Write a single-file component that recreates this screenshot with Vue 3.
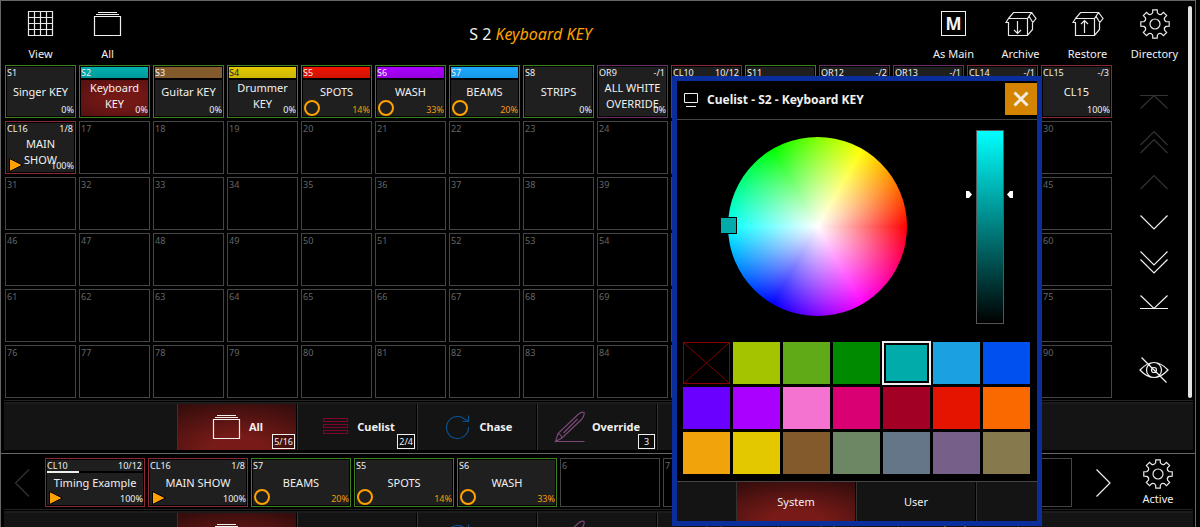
<script setup>
import { ref, computed, h } from 'vue'

const playbacks = [
  { id: 'S1', name: 'Singer KEY', kind: 'sub', pct: '0%' },
  { id: 'S2', name: 'Keyboard\nKEY', kind: 'sub', pct: '0%', strip: 'teal', active: true },
  { id: 'S3', name: 'Guitar KEY', kind: 'sub', pct: '0%', strip: 'brown' },
  { id: 'S4', name: 'Drummer\nKEY', kind: 'sub', pct: '0%', strip: 'yellow' },
  { id: 'S5', name: 'SPOTS', kind: 'sub', pct: '14%', strip: 'red', state: 'ring' },
  { id: 'S6', name: 'WASH', kind: 'sub', pct: '33%', strip: 'violet', state: 'ring' },
  { id: 'S7', name: 'BEAMS', kind: 'sub', pct: '20%', strip: 'blue', state: 'ring' },
  { id: 'S8', name: 'STRIPS', kind: 'sub', pct: '0%' },
  { id: 'OR9', name: 'ALL WHITE\nOVERRIDE', kind: 'ovr', pct: '0%', count: '-/1' },
  { id: 'CL10', kind: 'cue', count: '10/12' },
  { id: 'S11', kind: 'sub' },
  { id: 'OR12', kind: 'ovr', count: '-/2' },
  { id: 'OR13', kind: 'ovr', count: '-/1' },
  { id: 'CL14', kind: 'cue', count: '-/1' },
  { id: 'CL15', name: 'CL15', kind: 'cue', pct: '100%', count: '-/3' },
  { id: 'CL16', name: 'MAIN\nSHOW', kind: 'cue', pct: '100%', count: '1/8', state: 'play' },
]
for (let n = 17; n <= 90; n++) playbacks.push({ id: String(n), kind: 'empty' })

const running = [
  { id: 'CL10', name: 'Timing Example', kind: 'cue', pct: '100%', count: '10/12', state: 'play', progress: 33 },
  { id: 'CL16', name: 'MAIN SHOW', kind: 'cue', pct: '100%', count: '1/8', state: 'play' },
  { id: 'S7', name: 'BEAMS', kind: 'sub', pct: '20%', state: 'ring' },
  { id: 'S5', name: 'SPOTS', kind: 'sub', pct: '14%', state: 'ring' },
  { id: 'S6', name: 'WASH', kind: 'sub', pct: '33%', state: 'ring' },
  { id: '6', kind: 'empty' },
  { id: '7', kind: 'empty' },
  { id: '8', kind: 'empty' },
  { id: '9', kind: 'empty' },
  { id: '10', kind: 'empty' },
]

const filters = [
  { icon: 'stack', label: 'All', badge: '5/16', on: true },
  { icon: 'list', label: 'Cuelist', badge: '2/4' },
  { icon: 'loop', label: 'Chase' },
  { icon: 'pencil', label: 'Override', badge: '3' },
  { icon: 'disc' },
  { icon: 'fader' },
  { icon: 'clock' },
]

const swatches = [
  '', '#a4c400', '#60a917', '#008a00', '#00aba9', '#1ba1e2', '#0050ef',
  '#6a00ff', '#aa00ff', '#f472d0', '#d80073', '#a20025', '#e51400', '#fa6800',
  '#f0a30a', '#e3c800', '#825a2c', '#6d8764', '#647687', '#76608a', '#87794e',
]
const picked = ref(4)
const level = ref(67)
const markerTop = computed(() => ({ top: 100 - level.value + '%' }))

function gearPath() {
  const p = (r, deg) => {
    const a = (deg * Math.PI) / 180
    return (16 + r * Math.cos(a)).toFixed(2) + ' ' + (16 + r * Math.sin(a)).toFixed(2)
  }
  let d = ''
  for (let k = 0; k < 8; k++) {
    const a = k * 45
    d += (k ? 'L' : 'M') + p(11.4, a - 12) + 'L' + p(14.4, a - 9) + 'L' + p(14.4, a + 9) + 'L' + p(11.4, a + 12)
    d += 'Q' + p(9.4, a + 22.5) + ' ' + p(11.4, a + 33)
  }
  return d + 'Z'
}

const crate = 'M3.500 10.500L8.500 4.500H26.500L22.500 10.500H3.500L1 14.500H3.500V27.500H22.500L27.500 21.500V15M22.500 27.500V10.500M24.200 8.500L27.800 14.500L31 10.500L26.500 4.500'
const icons = {
  grid: ['#e8e8e8', 'M3.500 3.500H27.500V27.500H3.500ZM9.500 3.500V27.500M15.500 3.500V27.500M21.500 3.500V27.500M3.500 9.500H27.500M3.500 15.500H27.500M3.500 21.500H27.500'],
  stack: ['#f0f0f0', 'M2.500 8.500H28.500V27.500H2.500ZM4 6.500H27M6 4.500H25'],
  crateIn: ['#e8e8e8', crate + 'M12.500 13V25M9 22L12.500 25.500L16 22'],
  crateOut: ['#e8e8e8', crate + 'M12.500 25V12.500M9 16L12.500 12.500L16 16'],
  gear: ['#e8e8e8', gearPath() + 'M21 16A5 5 0 1 1 11 16A5 5 0 1 1 21 16Z'],
  list: ['#84002f', 'M4.500 7.500H28.500V10.500H4.500ZM4.500 13.500H28.500V16.500H4.500ZM4.500 19.500H28.500V22.500H4.500Z'],
  loop: ['#0a4f8c', 'M26.500 16A11 11 0 1 1 22.500 8L26.500 10.500M26.500 4.500V10.500H20.500'],
  pencil: ['#7a4876', 'M1.500 30.500H30.500M1.500 30.500L4 22.500L24 3.500C26.500 1.500 29 1 30 1.500C30.500 3 29.500 6 27.500 8.500L8 27ZM4 22.500C6 23 7.500 24.500 8 27M9.500 22L23.500 8'],
  disc: ['#3a2450', 'M28 16A12 12 0 1 1 4 16A12 12 0 1 1 28 16Z'],
  fader: ['#0c6a1c', 'M3 3.500H16V27H3Z'],
  clock: ['#a86c08', 'M7 3.500V27M27 3.500V27'],
  top: ['', 'M2 9.500H30M2.500 22.500L16 9.500L29.500 22.500'],
  pageUp: ['', 'M2.500 19L16 5.500L29.500 19M2.500 27L16 13.500L29.500 27'],
  up: ['', 'M2.500 23L16 9.500L29.500 23'],
  down: ['', 'M2.500 9.500L16 23L29.500 9.500'],
  pageDown: ['', 'M2.500 5.500L16 19L29.500 5.500M2.500 13.500L16 27L29.500 13.500'],
  bottom: ['', 'M2 22.500H30M2.500 9.500L16 22.500L29.500 9.500'],
  left: ['', 'M22 2.500L8.500 16L22 29.500'],
  right: ['', 'M9.500 2.500L23 16L9.500 29.500'],
  eye: ['', 'M2 16Q9 8.500 16 8.500T30 16Q23 23.500 16 23.500T2 16ZM23.500 16A7.500 7.500 0 1 1 8.500 16A7.500 7.500 0 1 1 23.500 16ZM18.500 16A2.500 2.500 0 1 1 13.500 16A2.500 2.500 0 1 1 18.500 16ZM3.500 3.500L28.500 28.500'],
}

const Glyph = (props) =>
  h('svg', { class: 'glyph', width: 32, height: 32, viewBox: '0 0 32 32', fill: 'none', 'aria-hidden': 'true' }, [
    h('path', { d: icons[props.name][1], stroke: icons[props.name][0] || 'currentColor', 'stroke-width': 1.2 }),
  ])
Glyph.props = ['name']

const Cell = (props) => {
  const c = props.c
  return h('button', { type: 'button', class: ['cell', c.kind, { active: c.active, tinted: c.strip, wide: props.wide }] }, [
    c.kind !== 'empty' ? h('span', { class: 'fill' }) : null,
    c.strip ? h('span', { class: ['strip', c.strip] }) : null,
    c.progress ? h('span', { class: 'progress' }, [h('span', { style: { width: c.progress + '%' } })]) : null,
    c.name ? h('span', { class: 'name' }, c.name) : null,
    h('span', { class: 'id' }, c.id),
    c.count ? h('span', { class: 'count' }, c.count) : null,
    c.state === 'ring' ? h('span', { class: 'ring' }) : null,
    c.state === 'play'
      ? h('svg', { class: 'play', width: 14, height: 14, viewBox: '0 0 14 14' }, [
          h('path', { d: 'M0.500 0.500V13.500L13.500 7Z', fill: '#ffa200', stroke: '#000' }),
        ])
      : null,
    c.pct ? h('span', { class: ['pct', { hot: c.state === 'ring' }] }, c.pct) : null,
  ])
}
Cell.props = ['c', 'wide']

const steps = [
  ['top', 'First', true], ['pageUp', 'Page up', true], ['up', 'Up', true],
  ['down', 'Down', false], ['pageDown', 'Page down', false], ['bottom', 'Last', false],
]
</script>

<template>
  <div class="desk">
    <section class="panel">
      <div class="upper">
        <div class="content">
          <header class="toolbar">
            <button type="button" class="tool"><Glyph name="grid" />View</button>
            <button type="button" class="tool"><Glyph name="stack" />All</button>
            <h1>S 2 <em>Keyboard KEY</em></h1>
            <button type="button" class="tool">
              <svg width="32" height="32" viewBox="0 0 32 32" aria-hidden="true">
                <rect x="3.500" y="3.500" width="24" height="24" fill="none" stroke="#f0f0f0" />
                <text x="15.500" y="21.500" text-anchor="middle" class="letter">M</text>
              </svg>As Main
            </button>
            <button type="button" class="tool"><Glyph name="crateIn" />Archive</button>
            <button type="button" class="tool"><Glyph name="crateOut" />Restore</button>
            <button type="button" class="tool"><Glyph name="gear" />Directory</button>
          </header>
          <div class="body">
            <div class="grid">
              <Cell v-for="c in playbacks" :key="c.id" :c="c" />
            </div>
            <nav class="steps">
              <button v-for="s in steps" :key="s[0]" type="button" :aria-label="s[1]" :class="{ off: s[2] }">
                <Glyph :name="s[0]" />
              </button>
              <button type="button" class="eye" aria-label="Hide"><Glyph name="eye" /></button>
            </nav>
          </div>
        </div>
        <div class="scroll"></div>
      </div>
      <nav class="tabs">
        <span class="spare"></span>
        <button v-for="f in filters" :key="f.icon" type="button" class="tab" :class="{ on: f.on }">
          <Glyph :name="f.icon" /><b>{{ f.label }}</b>
          <span v-if="f.badge" class="badge">{{ f.badge }}</span>
        </button>
        <span class="spare"></span>
      </nav>
    </section>

    <section class="panel second">
      <div class="runbar">
        <button type="button" class="arrow off" aria-label="Previous"><Glyph name="left" /></button>
        <div class="runs">
          <Cell v-for="c in running" :key="c.id" :c="c" :wide="true" />
        </div>
        <button type="button" class="arrow next" aria-label="Next"><Glyph name="right" /></button>
        <button type="button" class="tool small"><Glyph name="gear" />Active</button>
      </div>
      <nav class="tabs">
        <span class="spare"></span>
        <button v-for="f in filters" :key="f.icon" type="button" class="tab" :class="{ on: f.on }">
          <Glyph :name="f.icon" /><b>{{ f.label }}</b>
          <span v-if="f.badge" class="badge">{{ f.badge }}</span>
        </button>
        <span class="spare"></span>
      </nav>
    </section>

    <div class="dialog" role="dialog" aria-labelledby="dialog-title">
      <header class="head">
        <svg width="16" height="16" viewBox="0 0 16 16" fill="none" stroke="#f0f0f0" aria-hidden="true">
          <path d="M1.500 1.500H14.500V10.500H1.500ZM3 14.500H13" />
        </svg>
        <h2 id="dialog-title">Cuelist - S2 - Keyboard KEY</h2>
        <button type="button" class="close" aria-label="Close">
          <svg width="16" height="16" viewBox="0 0 16 16" stroke="#f4ece0" stroke-width="3" aria-hidden="true">
            <path d="M1.500 1.500L14.500 14.500M14.500 1.500L1.500 14.500" />
          </svg>
        </button>
      </header>
      <div class="picker">
        <div class="wheel"><span class="pin"></span></div>
        <div class="value">
          <input v-model.number="level" type="range" min="0" max="100" aria-label="Brightness" />
          <svg class="mark l" :style="markerTop" width="6" height="7" viewBox="0 0 6 7"><path d="M0 0H3L6 3.500L3 7H0Z" fill="#fff" /></svg>
          <svg class="mark r" :style="markerTop" width="6" height="7" viewBox="0 0 6 7"><path d="M6 0H3L0 3.500L3 7H6Z" fill="#fff" /></svg>
        </div>
      </div>
      <div class="swatches">
        <button
          v-for="(s, i) in swatches" :key="i" type="button" class="swatch"
          :class="{ none: !s, picked: i === picked }" :style="{ backgroundColor: s || '#000' }"
          :aria-label="s || 'No colour'" :aria-pressed="i === picked" @click="picked = i"
        >
          <svg v-if="!s" viewBox="0 0 45 40" preserveAspectRatio="none" aria-hidden="true">
            <path d="M0 0L45 40M45 0L0 40" stroke="#7c0000" />
          </svg>
        </button>
      </div>
      <nav class="foot">
        <span></span>
        <button type="button" class="on">System</button>
        <button type="button">User</button>
        <span></span>
      </nav>
    </div>
  </div>
</template>

<style>
body {
  background: #000;
  overflow: hidden;
}
button {
  padding: 0;
  border: 0;
  border-radius: 0;
  background: none;
  color: inherit;
  font: inherit;
}
.cell {
  display: grid;
  grid-template: minmax(0, 1fr) / minmax(0, 1fr);
  border: 1px solid #444;
  padding: 1px;
  height: 53px;
  background: #000;
  color: #f0f0f0;
  font: 11px/16px "Noto Sans", "Open Sans", sans-serif;
}
.cell > * {
  grid-area: 1 / 1;
}
.cell.wide {
  height: 49px;
}
.cell.sub {
  border-color: #3c821c;
}
.cell.cue {
  border-color: #8c2a34;
}
.cell.ovr {
  border-color: #6a2f68;
}
.cell .fill {
  background: #1f1f1f;
}
.cell.tinted .fill {
  margin-top: 13px;
}
.cell.active .fill {
  background: radial-gradient(ellipse at 60% 50%, #741816 30%, #541110);
}
.cell .strip {
  height: 11px;
}
.strip.teal { background: linear-gradient(#00b0ae, #009a98); }
.strip.brown { background: #825a2c; }
.strip.yellow { background: linear-gradient(#e3c800, #cfb600); }
.strip.red { background: linear-gradient(#ee1500, #d01200); }
.strip.violet { background: linear-gradient(#aa00ff, #9600e0); }
.strip.blue { background: linear-gradient(#1ba8ff, #1899e8); }
.cell .name {
  align-self: start;
  display: flex;
  align-items: center;
  justify-content: center;
  min-height: 24px;
  margin-top: 13px;
  text-align: center;
  white-space: pre-line;
}
.cell.wide .name {
  margin-top: 11px;
}
.cell .id,
.cell .count,
.cell .pct {
  font-size: 9px;
  line-height: 12px;
}
.cell .id {
  justify-self: start;
  align-self: start;
}
.strip.yellow ~ .id {
  color: #222;
}
.cell.empty .id {
  color: #666;
}
.cell .count {
  justify-self: end;
  align-self: start;
  margin-right: 1px;
}
.cell .pct {
  justify-self: end;
  align-self: end;
}
.cell .pct.hot {
  color: #f59c0c;
}
.cell .ring {
  align-self: end;
  width: 12px;
  height: 12px;
  margin: 0 0 0 1px;
  border: 2px solid #ffa200;
  border-radius: 50%;
}
.cell .play {
  align-self: end;
  margin-left: 2px;
}
.cell .progress {
  height: 2px;
  margin-top: 11px;
  background: #000;
}
.cell .progress span {
  display: block;
  height: 2px;
  background: #f0f0f0;
}
.glyph {
  flex: none;
}
</style>

<style scoped>
.desk {
  position: relative;
  height: 100vh;
  overflow: hidden;
  padding-right: 4px;
  box-sizing: border-box;
  background: #000;
  color: #f0f0f0;
  font: 11px/16px "Noto Sans", "Open Sans", sans-serif;
}
.panel {
  border: 1px solid #666;
}
.second {
  border-top: 0;
}
.upper {
  display: flex;
  padding-right: 3px;
}
.content {
  flex: 1;
  min-width: 0;
  padding-left: 4px;
}
.scroll {
  width: 4px;
  margin-top: 5px;
  border-radius: 2px;
  background: #e4e4e4;
}
.toolbar {
  display: flex;
  align-items: flex-start;
  height: 64px;
  padding-left: 2px;
}
.tool {
  display: flex;
  flex-direction: column;
  align-items: center;
  gap: 6px;
  width: 67px;
  padding-top: 7px;
}
.letter {
  fill: #f4f4f4;
  font: bold 17px "Noto Sans", sans-serif;
}
h1 {
  flex: 1;
  margin: 0;
  font-size: 16px;
  font-weight: 400;
  line-height: 66px;
  text-align: center;
}
h1 em {
  color: #ffa200;
}
.body {
  display: flex;
}
.grid {
  flex: 1;
  display: grid;
  grid-template-columns: repeat(15, minmax(0, 1fr));
  gap: 3px;
}
.steps {
  display: flex;
  flex-direction: column;
  align-items: center;
  width: 76px;
  padding: 17px 0 8px 8px;
  box-sizing: border-box;
}
.steps button {
  display: flex;
  align-items: center;
  justify-content: center;
  width: 40px;
  height: 40px;
}
.off {
  color: #333;
}
.steps .eye {
  margin-top: auto;
}
.tabs {
  display: flex;
  margin: 2px 2px 3px 3px;
  height: 46px;
  border-top: 1px solid #222;
  box-shadow: inset 0 1px #000, inset 0 3px #1c1c1c;
  padding-top: 3px;
}
.spare {
  flex: 1;
  background: #141414;
}
.spare:last-child {
  padding-left: 2px;
  border-left: 1px solid #333;
}
.tab {
  position: relative;
  display: flex;
  align-items: center;
  justify-content: center;
  gap: 6px;
  width: 120px;
  border-left: 1px solid #333;
  border-right: 1px solid #000;
  background: #141414;
}
.tab.on,
.foot .on {
  background: radial-gradient(ellipse 90% 110% at 50% 100%, #781b18 25%, #360d0c);
}
.badge {
  position: absolute;
  right: 1px;
  bottom: 1px;
  min-width: 13px;
  padding: 0 1px;
  border: 1px solid #f0f0f0;
  background: rgba(0, 0, 0, 0.3);
  font-size: 9px;
  line-height: 13px;
  text-align: center;
}
.runbar {
  display: flex;
  align-items: flex-start;
  padding: 4px 13px 0 0;
}
.runs {
  flex: 1;
  display: grid;
  grid-template-columns: repeat(10, minmax(0, 1fr));
  gap: 3px;
}
.arrow {
  display: flex;
  align-items: center;
  justify-content: center;
  width: 44px;
  height: 49px;
}
.arrow.next {
  width: 62px;
}
.tool.small {
  width: 48px;
  gap: 1px;
  padding: 0;
}
.dialog {
  position: absolute;
  top: 76px;
  right: 158px;
  width: 360px;
  border: 5px solid #0a2f9c;
  background: #000;
}
.head {
  display: flex;
  align-items: center;
  gap: 8px;
  height: 38px;
  padding-left: 6px;
  border-bottom: 1px solid #444;
}
h2 {
  flex: 1;
  margin: 0;
  font-size: 12px;
  line-height: 16px;
}
.close {
  display: flex;
  align-items: center;
  justify-content: center;
  width: 32px;
  height: 32px;
  margin-bottom: 2px;
  background: #d58400;
}
.picker {
  display: flex;
  justify-content: space-between;
  align-items: flex-start;
  padding: 10px 33px 18px 51px;
}
.wheel {
  position: relative;
  width: 179px;
  height: 179px;
  margin-top: 7px;
  border-radius: 50%;
  background:
    radial-gradient(closest-side, #fff, rgba(255, 255, 255, 0)),
    conic-gradient(from 90deg, #f00, #f0f, #00f, #0ff, #0f0, #ff0, #f00);
}
.pin {
  position: absolute;
  left: -8px;
  top: 80px;
  width: 15px;
  height: 15px;
  border: 1px solid #000;
  background: #00aba9;
}
.value {
  position: relative;
  width: 28px;
  height: 194px;
}
.value input {
  appearance: none;
  writing-mode: vertical-lr;
  direction: rtl;
  display: block;
  box-sizing: border-box;
  width: 28px;
  height: 194px;
  margin: 0;
  border: 1px solid #555;
  background: linear-gradient(#0ff, #000);
}
.value input::-webkit-slider-thumb {
  appearance: none;
  width: 28px;
  height: 2px;
  background: transparent;
}
.mark {
  position: absolute;
  margin-top: -3px;
}
.mark.l {
  left: -10px;
}
.mark.r {
  right: -9px;
}
.swatches {
  display: grid;
  grid-template-columns: repeat(7, minmax(0, 1fr));
  gap: 3px;
  padding: 0 7px 7px 6px;
}
.swatch {
  height: 42px;
}
.swatch.none {
  border: 1px solid #8a0000;
}
.swatch.none svg {
  display: block;
  width: 100%;
  height: 100%;
}
.swatch.picked {
  border: 2px solid #000;
  outline: 2px solid #f0f0f0;
  outline-offset: -1px;
  box-shadow: inset 0 0 0 1px #000;
}
.foot {
  display: flex;
  height: 39px;
  border-top: 1px solid #444;
}
.foot span {
  flex: 1;
  background: #141414;
}
.foot button {
  width: 120px;
  border-left: 1px solid #333;
  border-right: 1px solid #000;
  background-color: #141414;
}
.foot span:last-child {
  padding-left: 1px;
  border-left: 1px solid #333;
}
</style>
